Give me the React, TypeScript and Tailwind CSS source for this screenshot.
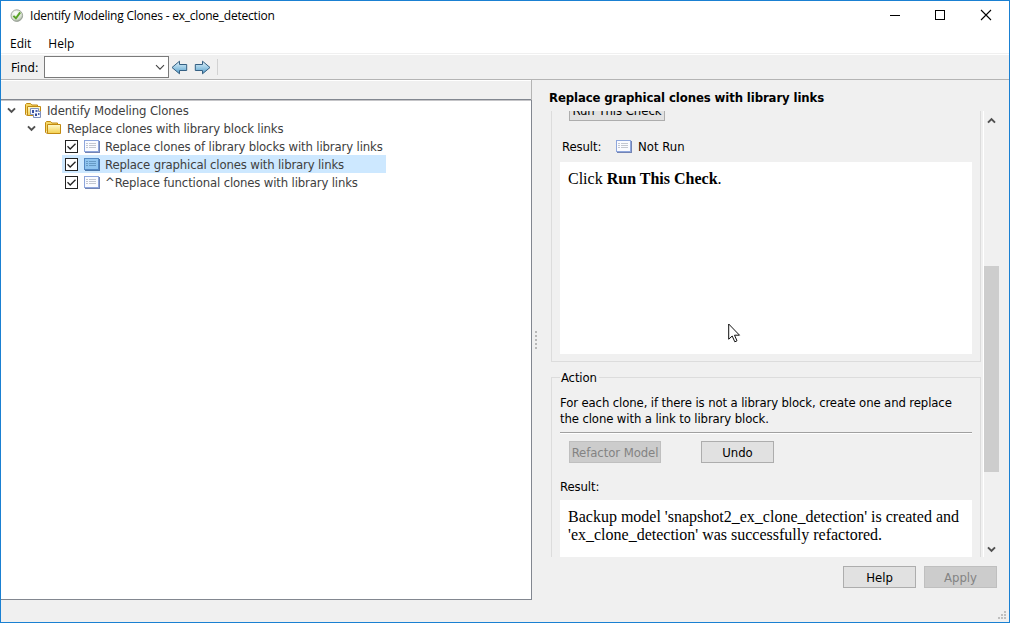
import type { ReactNode } from "react";

const UI = "font-['DejaVu_Sans_Condensed','DejaVu_Sans',sans-serif] text-[13px]";

function AppIcon() {
  return (
    <svg width="14" height="14" viewBox="0 0 14 14" className="shrink-0">
      <defs>
        <radialGradient id="ring" cx="40%" cy="30%" r="75%">
          <stop offset="0" stopColor="#ffffff" />
          <stop offset="0.7" stopColor="#d6e0d0" />
          <stop offset="1" stopColor="#8d9789" />
        </radialGradient>
      </defs>
      <circle cx="6.8" cy="6.6" r="5.8" fill="url(#ring)" stroke="#949c92" strokeWidth="0.9" />
      <path d="M3.4 6.9 L5.9 9.3 L10.2 3.4" fill="none" stroke="#58a326" strokeWidth="1.9" />
    </svg>
  );
}

function Arrow({ flip }: { flip?: boolean }) {
  return (
    <svg width="17" height="15" viewBox="0 0 17 15" className={flip ? "-scale-x-100" : ""}>
      <defs>
        <linearGradient id={flip ? "ar" : "al"} x1="0" y1="0" x2="0" y2="1">
          <stop offset="0" stopColor="#e5f3fa" />
          <stop offset="0.5" stopColor="#9ccbe5" />
          <stop offset="1" stopColor="#549bc9" />
        </linearGradient>
      </defs>
      <path
        d="M1 7.5 L8.5 1.2 V4.5 H15.7 V10.5 H8.5 V13.8 Z"
        fill={flip ? "url(#ar)" : "url(#al)"}
        stroke="#345f82"
        strokeWidth="1"
      />
    </svg>
  );
}

function Chevron({ up, className = "" }: { up?: boolean; className?: string }) {
  return (
    <svg width="9" height="7" viewBox="0 0 9 7" className={`${up ? "rotate-180" : ""} ${className}`}>
      <path d="M1 1.4 L4.5 4.9 L8 1.4" fill="none" stroke="#505050" strokeWidth="2" />
    </svg>
  );
}

function Folder({ badge }: { badge?: boolean }) {
  return (
    <svg width="18" height="16" viewBox="0 0 18 16" className="shrink-0">
      <defs>
        <linearGradient id="fold" x1="0" y1="0" x2="0" y2="1">
          <stop offset="0" stopColor="#fffbd0" />
          <stop offset="1" stopColor="#f3cf4d" />
        </linearGradient>
      </defs>
      <path d="M0.5 11.5 V2.5 L1.5 1.5 H5.5 L6.8 3 H12.5 V12" fill="#f5d765" stroke="#c28a12" />
      <path d="M2.5 13.5 V4.5 H15.5 V13.5 Z" fill="url(#fold)" stroke="#c28a12" />
      <path d="M0.5 4 V12.5 L2.5 13.5" fill="none" stroke="#c28a12" />
      {badge && (
        <g>
          <path d="M5.5 6.5 H13.5 V9.5 H15.5 V15.5 H8.5 V12.5 H5.5 Z" fill="#f4f7ff" stroke="#8191bd" />
          <rect x="7" y="8" width="2" height="3" fill="#354d9d" />
          <rect x="10.5" y="8" width="2" height="2" fill="#4c64ad" />
          <rect x="10" y="11.5" width="2" height="2.5" fill="#354d9d" />
          <rect x="13" y="11" width="1.5" height="2" fill="#4c64ad" />
        </g>
      )}
    </svg>
  );
}

function ListIcon({ selected }: { selected?: boolean }) {
  return (
    <svg width="16" height="13" viewBox="0 0 16 13" className="shrink-0" shapeRendering="crispEdges">
      <path d="M1 12.5 H15.5 V1" fill="none" stroke={selected ? "#4b76a9" : "#7384b4"} />
      <rect
        x="0.5"
        y="0.5"
        width="14"
        height="11"
        fill={selected ? "#8fc4ef" : "#fafbff"}
        stroke={selected ? "#5288c4" : "#8ea6dc"}
      />
      <path
        d="M2 3.5 H4 M2 5.5 H4 M2 7.5 H4 M5 3.5 H12 M5 5.5 H12 M5 7.5 H12"
        stroke={selected ? "#6599c4" : "#c3c7d0"}
      />
    </svg>
  );
}

function CheckBox() {
  return (
    <svg width="13" height="13" viewBox="0 0 13 13" className="shrink-0">
      <rect x="0.5" y="0.5" width="12" height="12" fill="#fff" stroke="#222" />
      <path d="M2.5 6.3 L5.2 9 L10.5 3.7" fill="none" stroke="#222" strokeWidth="1.3" />
    </svg>
  );
}

function Button({
  children,
  disabled,
  className,
}: {
  children: ReactNode;
  disabled?: boolean;
  className: string;
}) {
  return (
    <button
      disabled={disabled}
      className={`flex h-[22px] items-center justify-center whitespace-nowrap border pt-[2px] leading-[18px] ${
        disabled ? "border-[#bfbfbf] bg-[#cccccc] text-[#838383]" : "border-[#adadad] bg-[#e1e1e1] text-black"
      } ${className}`}
    >
      {children}
    </button>
  );
}

function TreeItem({ label, selected, tracking }: { label: string; selected?: boolean; tracking: string }) {
  return (
    <div className="flex h-[18px] items-center pl-[61px]">
      <div className={`flex h-[18px] items-center pl-[3px] ${selected ? "w-[324px] bg-[#cde8ff]" : ""}`}>
        <CheckBox />
        <span className="ml-[6px] flex">
          <ListIcon selected={selected} />
        </span>
        <span className={`ml-[5px] whitespace-nowrap pt-[2px] leading-[18px] ${tracking}`}>{label}</span>
      </div>
    </div>
  );
}

function TitleBar() {
  return (
    <header className="flex h-[30px] items-center pl-[9px] font-['Open_Sans',sans-serif] text-[12px] text-black">
      <AppIcon />
      <h1 className="ml-[6px] whitespace-nowrap tracking-[-0.22px]">
        Identify Modeling Clones - ex_clone_detection
      </h1>
      <svg width="103" height="12" viewBox="0 0 103 12" className="mr-[17px] mb-[2px] ml-auto">
        <path d="M1 6.5 H11" stroke="#000" shapeRendering="crispEdges" />
        <rect x="46.5" y="1.5" width="9" height="9" fill="none" stroke="#000" shapeRendering="crispEdges" />
        <path d="M92 1 L102 11 M102 1 L92 11" stroke="#000" strokeWidth="1.1" />
      </svg>
    </header>
  );
}

function Toolbar() {
  return (
    <div className="flex h-[24px] items-center pl-[10px] text-black">
      <span className="w-[33px] pt-px leading-[18px]">Find:</span>
      <div className="flex h-[22px] w-[125px] items-center justify-end border border-[#7a7a7a] bg-white pr-[3px]">
        <svg width="10" height="7" viewBox="0 0 10 7">
          <path d="M1 1.2 L5 5.2 L9 1.2" fill="none" stroke="#444" strokeWidth="1.1" />
        </svg>
      </div>
      <div className="ml-[2px] flex gap-[6px]">
        <Arrow />
        <Arrow flip />
      </div>
      <div className="ml-[6px] h-[16px] w-px bg-[#d2d2d2]" />
    </div>
  );
}

function Tree() {
  return (
    <section className="flex w-[531px] flex-col border-t border-white">
      <div className="h-[18px]" />
      <div className="h-[501px] border-t border-r border-b border-[#828790] bg-white text-[#404040]">
        <div className="h-full border-t border-[#c5c5c8]">
          <div className="flex h-[18px] items-center pl-[6px]">
            <Chevron />
            <span className="ml-[9px] flex">
              <Folder badge />
            </span>
            <span className="ml-[4px] whitespace-nowrap pt-[2px] leading-[18px] tracking-[-0.1px]">
              Identify Modeling Clones
            </span>
          </div>
          <div className="flex h-[18px] items-center pl-[26px]">
            <Chevron />
            <span className="ml-[9px] flex">
              <Folder />
            </span>
            <span className="ml-[4px] whitespace-nowrap pt-[2px] leading-[18px] tracking-[-0.16px]">
              Replace clones with library block links
            </span>
          </div>
          <TreeItem label="Replace clones of library blocks with library links" tracking="tracking-[-0.145px]" />
          <TreeItem label="Replace graphical clones with library links" tracking="tracking-[-0.16px]" selected />
          <TreeItem label="^Replace functional clones with library links" tracking="tracking-[-0.15px]" />
        </div>
      </div>
    </section>
  );
}

function CheckPanel() {
  return (
    <div className="flex h-[446px] overflow-hidden">
      <div className="w-[430px] shrink-0">
        <div className="flex h-[251px] flex-col border-x border-b border-[#dcdcdc] pl-[8px]">
          <div className="h-[10px] overflow-hidden pl-[9px]">
            <Button className="-mt-[12px] w-[96px] tracking-[-0.05px]">Run This Check</Button>
          </div>
          <div className="mt-[16px] flex h-[18px] items-center pl-[2px] leading-[18px]">
            <span className="w-[54px] pt-[2px] tracking-[-0.1px]">Result:</span>
            <ListIcon />
            <span className="ml-[6px] pt-[2px]">Not Run</span>
          </div>
          <div className="mt-[7px] h-[192px] w-[412px] bg-white px-[8px] pt-[8px] font-['Liberation_Serif',serif] text-[16px] leading-[18px]">
            Click <b>Run This Check</b>.
          </div>
        </div>
        <fieldset className="mt-[7px] h-[220px] border border-[#dcdcdc] pl-[8px]">
          <legend className="ml-0 h-[17px] px-[2px] leading-[18px] tracking-[-0.15px] -indent-px">Action</legend>
          <div className="mt-[9px] h-[38px] w-[412px] border-b border-[#a0a0a0] leading-[16px] whitespace-nowrap tracking-[-0.12px]">
            For each clone, if there is not a library block, create one and replace
            <br />
            the clone with a link to library block.
          </div>
          <div className="h-px w-[412px] bg-white" />
          <div className="mt-[7px] flex gap-[40px] pl-[9px]">
            <Button disabled className="w-[92px] tracking-[-0.08px]">
              Refactor Model
            </Button>
            <Button className="w-[73px]">Undo</Button>
          </div>
          <div className="mt-[15px] leading-[18px] tracking-[-0.1px]">Result:</div>
          <div className="mt-[4px] h-[70px] w-[412px] bg-white px-[8px] pt-[8px] font-['Liberation_Serif',serif] text-[16px] leading-[18px] whitespace-nowrap">
            Backup model 'snapshot2_ex_clone_detection' is created and
            <br />
            'ex_clone_detection' was successfully refactored.
          </div>
        </fieldset>
      </div>
      <div className="ml-[2px] flex w-[17px] shrink-0 flex-col items-start border-l border-white">
        <Chevron up className="mt-[6px] ml-[3px]" />
        <div className="mt-[142px] h-[206px] w-[15px] bg-[#cdcdcd]" />
        <Chevron className="mt-[74px] ml-[3px]" />
      </div>
    </div>
  );
}

export default function App() {
  return (
    <div className={`flex h-[623px] w-[1010px] flex-col overflow-hidden border border-[#1a80d2] bg-[#f0f0f0] text-black ${UI}`}>
      <div className="h-[54px] bg-white">
        <TitleBar />
        <nav className="flex h-[23px] items-center gap-[17px] border-b border-[#f0f0f0] pl-[9px] font-['Open_Sans',sans-serif] text-[12px] leading-[18px]">
          <span className="pt-[3px]">Edit</span>
          <span className="pt-[3px]">Help</span>
        </nav>
      </div>
      <Toolbar />
      <main className="flex min-h-0 flex-1 border-t border-[#b4b4b4]">
        <Tree />
        <div className="h-[20px] w-px -ml-px bg-[#b4b4b4]" />
        <div className="flex w-[9px] flex-col items-center gap-[2px] pt-[251px] pr-px">
          <i className="size-[2px] bg-[#b8b8b8]" />
          <i className="size-[2px] bg-[#b8b8b8]" />
          <i className="size-[2px] bg-[#b8b8b8]" />
          <i className="size-[2px] bg-[#b8b8b8]" />
          <i className="size-[2px] bg-[#b8b8b8]" />
        </div>
        <section className="flex flex-1 flex-col pl-[10px]">
          <h2 className="-ml-[2px] h-[31px] pt-[9px] leading-[18px] font-bold whitespace-nowrap tracking-[-0.1px]">
            Replace graphical clones with library links
          </h2>
          <CheckPanel />
          <footer className="mt-[9px] flex justify-end gap-[8px] pr-[12px]">
            <Button className="w-[73px]">Help</Button>
            <Button disabled className="w-[73px]">
              Apply
            </Button>
          </footer>
          <svg width="9" height="9" viewBox="0 0 9 9" className="mt-auto mr-[2px] mb-[2px] self-end" fill="#bfbfbf">
            <path d="M6 0h2v2h-2z M3 3h2v2h-2z M6 3h2v2h-2z M0 6h2v2h-2z M3 6h2v2h-2z M6 6h2v2h-2z" />
          </svg>
        </section>
      </main>
      <svg width="14" height="21" viewBox="0 0 14 21" className="absolute top-[323px] left-[728px]">
        <path
          d="M0.7 1 V16.2 L4.2 13 L6.8 18.8 L9 17.8 L6.5 12.2 H11.5 Z"
          fill="#fff"
          stroke="#111"
          strokeWidth="1"
        />
      </svg>
    </div>
  );
}
